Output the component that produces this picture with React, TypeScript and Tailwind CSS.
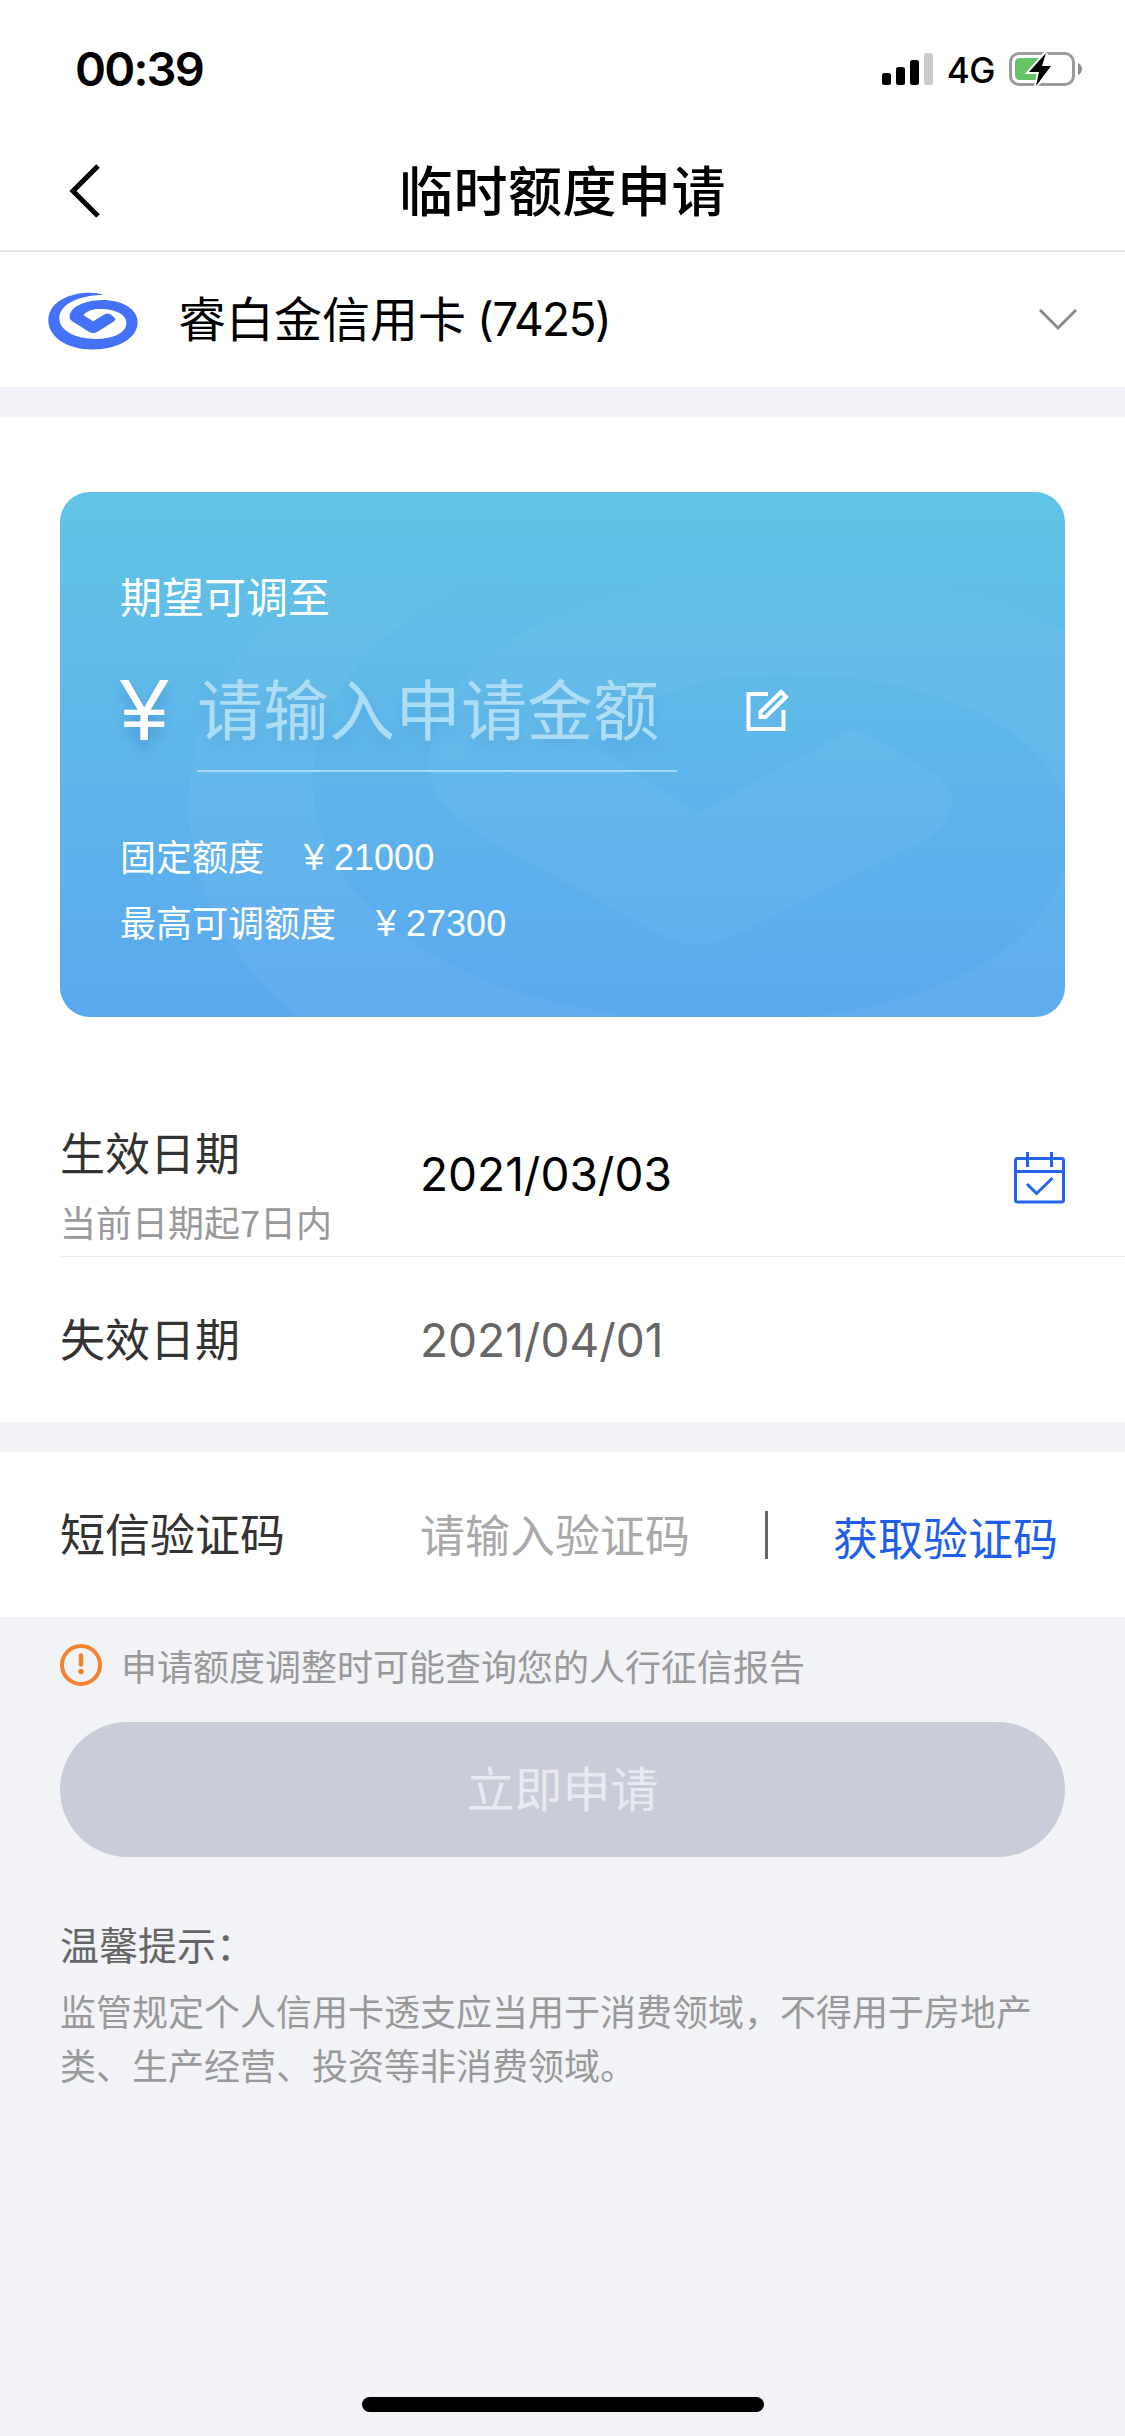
import type { ReactNode } from 'react';

const SWIRL_PATH =
  'M222 75 C205 69 180 67 160 70 C95 77 55 110 55 152 C55 203 112 240 188 240 C265 240 324 206 324 158 C324 117 275 90 215 91 C165 92 118 112 119 143 C119 149 123 153 129 156 L177 186 Q190 194 203 186 L251 156 Q262 148 251 141 L242 134 Q234 129 225 134 L190 155 L163 138 Q160 136 163 133 C172 124 190 118 212 118 C257 118 290 134 290 160 C290 190 250 208 198 208 C137 208 88 184 88 146 C88 107 140 77 222 75 Z';

const WATERMARK_PATH =
  'M755 19 C692 -4 598 -11 523 0 C279 27 129 152 129 312 C129 505 343 646 628 646 C917 646 1138 517 1138 334 C1138 179 954 76 729 80 C500 84 365 175 369 277 C372 300 385 322 425 346 L607 446 Q638 460 670 446 L865 348 Q912 315 878 284 L802 239 Q795 235 788 239 L638 321 L525 250 C560 215 630 182 718 182 C887 182 1010 243 1010 342 C1010 456 860 530 665 530 C437 530 253 433 253 289 C253 141 448 27 755 19 Z';

function StatusBar() {
  return (
    <div className="flex h-[132px] items-start justify-between pl-[75px] pr-[43px]">
      <span className="pt-[42px] font-['Inter',sans-serif] text-[47px] font-semibold leading-[54px] tracking-[-1.8px]">
        00:39
      </span>
      <div className="flex items-start gap-[14px] pt-[52px]">
        <svg width="52" height="34" viewBox="0 0 52 34">
          <rect x="1" y="21" width="9" height="12" rx="2.5" />
          <rect x="15" y="15" width="9" height="18" rx="2.5" />
          <rect x="29" y="8" width="9" height="25" rx="2.5" />
          <rect x="43" y="1" width="9" height="32" rx="2.5" fill="#cbcbcb" />
        </svg>
        <span className="font-['Inter',sans-serif] text-[35px] font-medium leading-[36px] tracking-[-0.5px]">
          4G
        </span>
        <svg width="73" height="34" viewBox="0 0 73 34">
          <rect
            x="1.5"
            y="1.5"
            width="63"
            height="31"
            rx="8.5"
            fill="none"
            stroke="#9b9b9b"
            strokeWidth="3"
          />
          <path d="M69 11 Q73 13 73 17 Q73 21 69 23 Z" fill="#8f8f8f" />
          <path
            d="M11 6 H31 V28 H11 Q6 28 6 23 V11 Q6 6 11 6 Z"
            fill="#65c466"
          />
          <path
            d="M37 1 L20 20 H30 L27 34 L42 14 H33 Z"
            stroke="#fff"
            strokeWidth="4"
            paintOrder="stroke"
          />
        </svg>
      </div>
    </div>
  );
}

function NavBar() {
  return (
    <header className="grid h-[120px] grid-cols-[200px_1fr_200px] items-center border-b-2 border-[#e2e3e5]">
      <svg
        className="ml-[66px]"
        width="38"
        height="56"
        viewBox="0 0 38 56"
        fill="none"
        stroke="#000"
        strokeWidth="5"
      >
        <path d="M32 3 L7 28 L32 53" />
      </svg>
      <h1 className="pb-[5px] text-center text-[54px] font-medium leading-[60px] tracking-[0.5px]">
        临时额度申请
      </h1>
    </header>
  );
}

function CardSelect() {
  return (
    <div className="flex h-[135px] items-center pl-12 pr-[48px]">
      <svg
        className="mt-[2px]"
        width="90"
        height="58"
        viewBox="54 67 271 174"
        fill="#4371f8"
      >
        <path d={SWIRL_PATH} />
      </svg>
      <div className="ml-[40px] flex items-center gap-[11px] text-[48px] leading-[60px]">
        <span className="pb-[7px]">睿白金信用卡</span>
        <span className="pb-[1px] font-['Inter',sans-serif] text-[46px] tracking-[-1.6px]">
          (7425)
        </span>
      </div>
      <svg
        className="ml-auto"
        width="38"
        height="24"
        viewBox="0 0 38 24"
        fill="none"
        stroke="#8a8a8a"
        strokeWidth="3"
      >
        <path d="M1 2 L19 20 L37 2" />
      </svg>
    </div>
  );
}

interface LimitLineProps {
  label: string;
  amount: number;
}

function LimitLine({ label, amount }: LimitLineProps) {
  return (
    <div className="flex h-[66px] items-center gap-[40px] text-[36px] leading-[54px]">
      <span>{label}</span>
      <span className="pt-[6px] font-['Liberation_Sans',sans-serif]">
        ¥ {amount}
      </span>
    </div>
  );
}

function LimitCard() {
  return (
    <section className="relative mx-[60px] h-[525px] overflow-hidden rounded-[30px] bg-linear-to-b from-[#62c4e5] to-[#5aa8ee] text-white">
      <svg
        className="absolute inset-0"
        width="1005"
        height="525"
        viewBox="0 0 1005 525"
      >
        <defs>
          <linearGradient
            id="watermark"
            gradientUnits="userSpaceOnUse"
            x1="0"
            y1="80"
            x2="0"
            y2="240"
          >
            <stop offset="0" stopColor="#fff" stopOpacity="0" />
            <stop offset="0.35" stopColor="#fff" stopOpacity="0.03" />
            <stop offset="1" stopColor="#fff" stopOpacity="0.04" />
          </linearGradient>
        </defs>
        <path d={WATERMARK_PATH} fill="url(#watermark)" />
      </svg>
      <div className="relative flex flex-col px-[60px] pt-[73px]">
        <span className="text-[42px] leading-[60px]">期望可调至</span>
        <div className="mt-[23px] flex h-[123px] items-start">
          <span className="w-[77px] pt-[17px] font-['Liberation_Sans',sans-serif] text-[87px] leading-[90px] [text-shadow:0_9px_12px_rgba(50,110,190,0.4)]">
            ¥
          </span>
          <div className="h-[124px] w-[480px] border-b-2 border-white/45 pt-[13px] text-[66px] leading-[90px] text-[#acddf4] [text-shadow:0_9px_12px_rgba(50,110,190,0.18)]">
            请输入申请金额
          </div>
          <svg
            className="ml-[69px] mt-[41px]"
            width="43"
            height="43"
            viewBox="0 0 43 43"
            fill="none"
            stroke="#fff"
            strokeWidth="4"
          >
            <path d="M22 5 H2.5 V40 H37.5 V21" />
            <path d="M35 3 L40 8 L19.5 28 L14.5 28 L14.5 23 Z" />
          </svg>
        </div>
        <div className="mt-[51px]">
          <LimitLine label="固定额度" amount={21000} />
          <LimitLine label="最高可调额度" amount={27300} />
        </div>
      </div>
    </section>
  );
}

interface FormRowProps {
  label: string;
  hint?: string;
  children: ReactNode;
}

function FormRow({ label, hint, children }: FormRowProps) {
  return (
    <div className="ml-[60px] flex h-[165px] items-center pr-[60px]">
      <div className="w-[360px] pb-[4px] text-[45px] leading-[60px] text-[#333]">
        {hint ? <div className="pt-[26px]">{label}</div> : label}
        {hint && (
          <div className="mt-[12px] text-[36px] leading-[54px] text-[#999]">
            {hint}
          </div>
        )}
      </div>
      {children}
    </div>
  );
}

function CalendarIcon() {
  return (
    <svg
      className="ml-auto mt-[8px]"
      width="51"
      height="52"
      viewBox="0 0 51 52"
      fill="none"
      stroke="#2563f0"
      strokeWidth="3"
    >
      <rect x="1.5" y="6.5" width="48" height="43.5" rx="2" />
      <path d="M2 19.5 H49 M13.5 0 V15 M37.5 0 V15" />
      <path d="M13 32 L22.5 41.5 L38.5 26" />
    </svg>
  );
}

export default function App() {
  return (
    <div className="flex h-[2436px] w-[1125px] flex-col bg-[#f2f3f7] font-['Noto_Sans_CJK_SC',sans-serif] text-black">
      <div className="bg-white">
        <StatusBar />
        <NavBar />
        <CardSelect />
      </div>

      <div className="mt-[30px] bg-white pt-[75px]">
        <LimitCard />
        <div className="pt-[74px]">
          <FormRow label="生效日期" hint="当前日期起7日内">
            <span className="font-['Inter',sans-serif] text-[46px] leading-[60px]">
              2021/03/03
            </span>
            <CalendarIcon />
          </FormRow>
          <div className="ml-[60px] border-t border-[#ececee]" />
          <FormRow label="失效日期">
            <span className="font-['Inter',sans-serif] text-[46px] leading-[60px] text-[#666]">
              2021/04/01
            </span>
          </FormRow>
        </div>
      </div>

      <div className="mt-[30px] bg-white">
        <FormRow label="短信验证码">
          <span className="pb-[2px] text-[45px] leading-[60px] text-[#a9a9a9]">
            请输入验证码
          </span>
          <div className="ml-[75px] h-[48px] w-[3px] bg-[#666]" />
          <span className="ml-[65px] pt-[4px] text-[45px] leading-[60px] text-[#1f5eea]">
            获取验证码
          </span>
        </FormRow>
      </div>

      <div className="px-[60px] pt-[24px]">
        <div className="flex h-[48px] items-center gap-[19px] text-[36px] leading-[48px] text-[#999]">
          <svg width="42" height="42" viewBox="0 0 42 42" fill="none">
            <circle cx="21" cy="21" r="19" stroke="#f5822f" strokeWidth="4" />
            <path
              d="M21 11.5 V20.5"
              stroke="#f5822f"
              strokeWidth="4.5"
              strokeLinecap="round"
            />
            <circle cx="21" cy="27.5" r="2.8" fill="#f5822f" />
          </svg>
          <span>申请额度调整时可能查询您的人行征信报告</span>
        </div>
        <button className="mt-[33px] block h-[135px] w-full rounded-full bg-[#cbccd9] pb-[7px] text-[48px] leading-[60px] text-[#e9eaf1]">
          立即申请
        </button>
        <h2 className="mt-[56px] text-[39px] leading-[60px] text-[#666]">
          温馨提示：
        </h2>
        <p className="mt-[10px] text-[36px] leading-[54px] text-[#999]">
          监管规定个人信用卡透支应当用于消费领域，不得用于房地产类、生产经营、投资等非消费领域。
        </p>
      </div>

      <div className="mx-auto mb-[24px] mt-auto h-[15px] w-[402px] rounded-full bg-black" />
    </div>
  );
}
